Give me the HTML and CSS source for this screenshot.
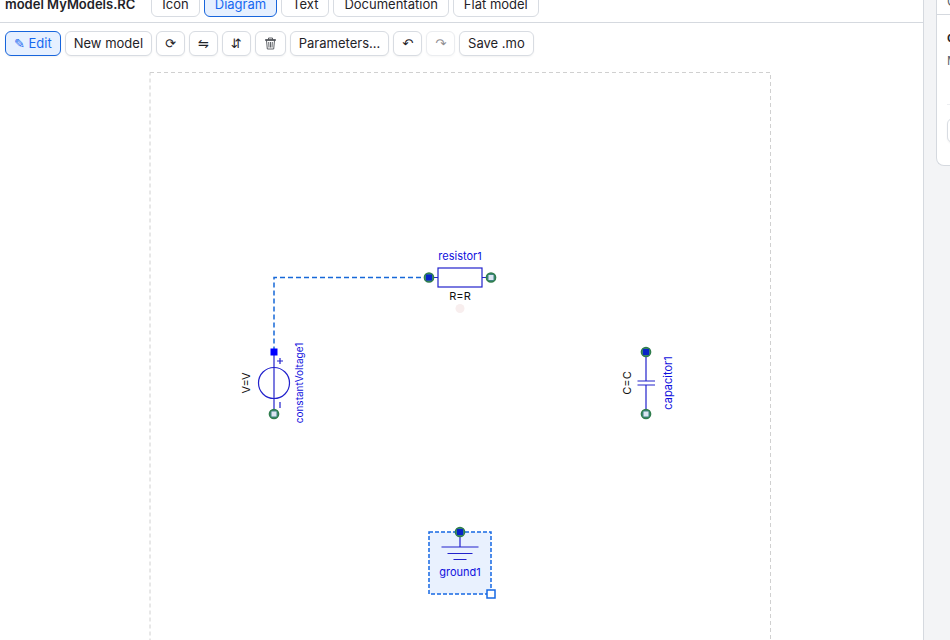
FILE: index.html
```html
<!DOCTYPE html>
<html lang="en">
<head>
<meta charset="utf-8">
<title>MyModels.RC</title>
<link rel="stylesheet" href="styles.css">
</head>
<body>
<div class="app">
<main class="editor">
<header class="tabs">
<h1 class="title">model MyModels.RC</h1>
<nav class="tab-list">
<button class="btn tab">Icon</button>
<button class="btn tab active">Diagram</button>
<button class="btn tab">Text</button>
<button class="btn tab">Documentation</button>
<button class="btn tab">Flat model</button>
</nav>
</header>
<div class="toolbar">
<button class="btn active">✎ Edit</button>
<button class="btn">New model</button>
<button class="btn" aria-label="Rotate">⟳</button>
<button class="btn" aria-label="Flip horizontally">⇋</button>
<button class="btn" aria-label="Flip vertically">⇵</button>
<button class="btn" aria-label="Delete"><svg class="icon" viewBox="0 0 13 13" aria-hidden="true"><path d="M1.500 3.500V2.500H11.500V3.500ZM4.500 2.500V1H8.500V2.500M2.500 3.500L3.300 12H9.700L10.500 3.500M4.700 5L5 10.500M6.500 5V10.500M8.300 5L8 10.500"/></svg></button>
<button class="btn">Parameters…</button>
<button class="btn" aria-label="Undo">↶</button>
<button class="btn" aria-label="Redo" disabled>↷</button>
<button class="btn">Save .mo</button>
</div>
<div class="canvas">
<svg class="diagram" viewBox="149 72 622 622" role="img" aria-label="Circuit diagram">
<rect class="frame" x="150" y="72.500" width="620.500" height="620"/>
<path class="wire" d="M429 277.500H274V352"/>
<g class="part">
<path d="M429 277.500H438M482 277.500H491"/>
<rect x="438" y="268" width="44" height="19" class="body"/>
</g>
<text class="name" x="460" y="260">resistor1</text>
<text class="value" x="460" y="300">R=R</text>
<circle cx="460" cy="308.500" r="4.500" class="heat"/>
<g class="part">
<path d="M274 352V414"/>
<circle cx="274" cy="383" r="15.500" fill="none"/>
<path d="M277 361H283M280 358V364M280 402V408"/>
</g>
<text class="value" transform="translate(250 383) rotate(-90)">V=V</text>
<text class="name small" transform="translate(303 383) rotate(-90)">constantVoltage1</text>
<g class="part">
<path d="M646 352V381M646 385V414M637.500 381H655M637.500 385H655"/>
</g>
<text class="value" transform="translate(631 383) rotate(-90)">C=C</text>
<text class="name" transform="translate(672 383) rotate(-90)">capacitor1</text>
<rect class="selection" x="429" y="532" width="62" height="62"/>
<path class="part" d="M460 532V547M441.500 547H478.500M447.500 553.500H472.500M453.500 559.500H466.500"/>
<text class="name" x="460" y="576">ground1</text>
<rect class="handle" x="487" y="590" width="8" height="8"/>
<rect class="pin" x="270.500" y="348.500" width="7" height="7"/>
<g class="port">
<circle cx="429" cy="277.500" r="4.600"/><rect class="pos" x="426" y="274.500" width="6" height="6"/>
<circle cx="491" cy="277.500" r="4.600"/><rect class="neg" x="488.500" y="275" width="5" height="5"/>
<circle cx="274" cy="414" r="4.600"/><rect class="neg" x="271.500" y="411.500" width="5" height="5"/>
<circle cx="646" cy="352" r="4.600"/><rect class="pos" x="643" y="349" width="6" height="6"/>
<circle cx="646" cy="414" r="4.600"/><rect class="neg" x="643.500" y="411.500" width="5" height="5"/>
<circle cx="460" cy="532" r="4.600"/><rect class="pos" x="457" y="529" width="6" height="6"/>
</g>
</svg>
</div>
</main>
<aside class="inspector">
<div class="inspector-head">C</div>
<div class="inspector-body">
<h2 class="inspector-name">c</h2>
<p class="inspector-type">M</p>
<div class="inspector-foot"><button class="btn field" aria-label="Apply"></button></div>
</div>
</aside>
</div>
</body>
</html>
```
FILE: styles.css
```css
* { box-sizing: border-box; }
html, body { height: 100%; }
body {
  margin: 0;
  overflow: hidden;
  background: #f3f4f6;
  color: #1f2328;
  font: 13px/17px Inter, "DejaVu Sans", sans-serif;
}
.app {
  display: grid;
  grid-template-columns: minmax(0, 1fr) 14px;
  gap: 12px;
  height: 100%;
}
.editor {
  background: #fff;
  border-right: 1px solid #d5d9df;
  overflow: hidden;
}
.tabs {
  display: flex;
  align-items: center;
  gap: 16px;
  margin-top: -8px;
  padding: 0 5px 5px;
  border-bottom: 1px solid #d5d9df;
}
.title { margin: 0; font-size: 13px; font-weight: 600; }
.tab-list, .toolbar { display: flex; gap: 4px; }
.toolbar { padding: 8px 5px; }
.btn {
  height: 25px;
  padding: 0 8px;
  border: 1px solid #d8dce2;
  border-radius: 6px;
  background: #fff;
  color: #1f2328;
  font: inherit;
  white-space: nowrap;
  box-shadow: 0 1px 2px #0000000d;
}
.btn:disabled { color: #1f2328; opacity: 0.5; }
.tab { padding: 0 10px; box-shadow: none; }
.btn.active { background: #e6f0ff; border-color: #1765dc; color: #1668f0; }
.icon {
  display: block;
  width: 13px;
  height: 13px;
  fill: none;
  stroke: #3a3e44;
  stroke-width: 0.8px;
}
.canvas { display: flex; justify-content: center; padding: 8px 4px 0 0; }
.diagram { width: 622px; flex: none; }
.frame { fill: none; stroke: #d0d0d0; stroke-dasharray: 4 3; }
.wire { fill: none; stroke: #1668d8; stroke-width: 1.5px; stroke-dasharray: 5 3; }
.part { fill: none; stroke: #2222cc; stroke-width: 1.2px; }
.body { fill: #fff; }
.name, .value { font-size: 11px; text-anchor: middle; fill: #1010dd; }
.value { fill: #111; }
.small { font-size: 10px; }
.heat { fill: #f8eeee; }
.selection { fill: #1668f318; stroke: #1668e3; stroke-width: 1.5px; stroke-dasharray: 4 2; }
.handle { fill: #fff; stroke: #1668e3; stroke-width: 1.5px; }
.pin { fill: #00f; }
.port circle { fill: #3e8580; stroke: #2f7d4c; stroke-width: 1.5px; }
.port .pos { fill: #0824c8; }
.port .neg { fill: #dce5f2; }
.inspector {
  align-self: start;
  margin-top: -12px;
  border: 1px solid #d5d9df;
  border-right: 0;
  border-bottom-left-radius: 8px;
  background: #fff;
  overflow: hidden;
}
.inspector-head { height: 26px; padding: 4px 0 0 10px; border-bottom: 1px solid #d5d9df; color: #59636e; }
.inspector-body { padding: 14px 0 22px 10px; }
.inspector-name { margin: 0; font-size: 13px; font-weight: 600; }
.inspector-type { margin: 6px 0 0; color: #59636e; font-size: 12px; }
.inspector-foot { margin-top: 35px; padding-top: 13px; border-top: 1px solid #eceef1; }
.field { display: block; width: 30px; }
```
